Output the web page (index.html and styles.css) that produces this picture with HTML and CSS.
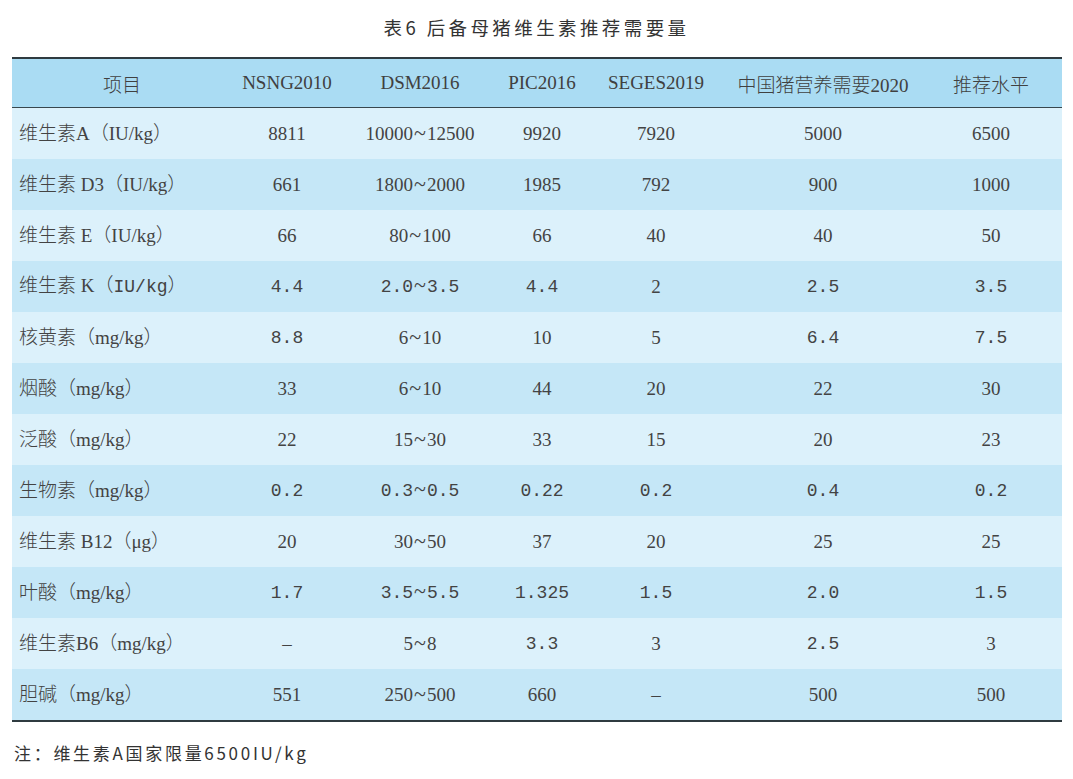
FILE: index.html
```
<!DOCTYPE html>
<html lang="zh">
<head>
<meta charset="utf-8">
<link rel="stylesheet" href="styles.css">
</head>
<body>
<div class="page">
  <h1 class="title">表6 后备母猪维生素推荐需要量</h1>
  <table class="vt">
    <colgroup>
      <col class="c1"><col class="c2"><col class="c3"><col class="c4"><col class="c5"><col class="c6"><col class="c7">
    </colgroup>
    <thead>
      <tr><th>项目</th><th>NSNG2010</th><th>DSM2016</th><th>PIC2016</th><th>SEGES2019</th><th>中国猪营养需要2020</th><th>推荐水平</th></tr>
    </thead>
    <tbody>
      <tr><td>维生素A（IU/kg）</td><td>8811</td><td>10000<span class="t">~</span>12500</td><td>9920</td><td>7920</td><td>5000</td><td>6500</td></tr>
      <tr><td>维生素 D3（IU/kg）</td><td>661</td><td>1800<span class="t">~</span>2000</td><td>1985</td><td>792</td><td>900</td><td>1000</td></tr>
      <tr><td>维生素 E（IU/kg）</td><td>66</td><td>80<span class="t">~</span>100</td><td>66</td><td>40</td><td>40</td><td>50</td></tr>
      <tr><td>维生素 K（<span class="m">IU/kg</span>）</td><td class="m">4.4</td><td class="m">2.0<span class="t">~</span>3.5</td><td class="m">4.4</td><td>2</td><td class="m">2.5</td><td class="m">3.5</td></tr>
      <tr><td>核黄素（mg/kg）</td><td class="m">8.8</td><td>6<span class="t">~</span>10</td><td>10</td><td>5</td><td class="m">6.4</td><td class="m">7.5</td></tr>
      <tr><td>烟酸（mg/kg）</td><td>33</td><td>6<span class="t">~</span>10</td><td>44</td><td>20</td><td>22</td><td>30</td></tr>
      <tr><td>泛酸（mg/kg）</td><td>22</td><td>15<span class="t">~</span>30</td><td>33</td><td>15</td><td>20</td><td>23</td></tr>
      <tr><td>生物素（mg/kg）</td><td class="m">0.2</td><td class="m">0.3<span class="t">~</span>0.5</td><td class="m">0.22</td><td class="m">0.2</td><td class="m">0.4</td><td class="m">0.2</td></tr>
      <tr><td>维生素 B12（μg）</td><td>20</td><td>30<span class="t">~</span>50</td><td>37</td><td>20</td><td>25</td><td>25</td></tr>
      <tr><td>叶酸（mg/kg）</td><td class="m">1.7</td><td class="m">3.5<span class="t">~</span>5.5</td><td class="m">1.325</td><td class="m">1.5</td><td class="m">2.0</td><td class="m">1.5</td></tr>
      <tr><td>维生素B6（mg/kg）</td><td>–</td><td>5<span class="t">~</span>8</td><td class="m">3.3</td><td>3</td><td class="m">2.5</td><td>3</td></tr>
      <tr><td>胆碱（mg/kg）</td><td>551</td><td>250<span class="t">~</span>500</td><td>660</td><td>–</td><td>500</td><td>500</td></tr>
    </tbody>
  </table>
  <p class="note">注：维生素A国家限量6500IU/kg</p>
</div>
</body>
</html>
```
FILE: styles.css
```
html, body {
  margin: 0;
  padding: 0;
  background: #ffffff;
}
.page {
  width: 1073px;
  height: 779px;
  overflow: hidden;
  font-family: "Liberation Serif", "Noto Sans CJK SC", serif;
  color: #434343;
}
.title {
  margin: 0;
  padding-top: 13px;
  height: 57px;
  box-sizing: border-box;
  text-align: center;
  font-family: "Noto Sans CJK SC", sans-serif;
  font-weight: 400;
  font-size: 18.5px;
  line-height: 28px;
  letter-spacing: 3.4px;
  color: #333333;
}
.vt {
  margin-left: 12px;
  width: 1050px;
  border-collapse: collapse;
  table-layout: fixed;
  border-top: 2px solid #2f3b40;
  border-bottom: 2px solid #2f3b40;
  font-size: 19px;
}
.c1 { width: 220px; }
.c2 { width: 110px; }
.c3 { width: 156px; }
.c4 { width: 88px; }
.c5 { width: 140px; }
.c6 { width: 194px; }
.c7 { width: 142px; }
.vt th {
  height: 48px;
  padding: 0;
  font-weight: 300;
  background: #aadcf3;
  border-bottom: 1.5px solid #38474d;
  text-align: center;
  color: #404040;
}
.vt td {
  height: 51px;
  padding: 0;
  font-weight: 300;
  line-height: 24px;
  text-align: center;
  white-space: nowrap;
}
.vt td:first-child {
  text-align: left;
  padding-left: 7px;
}
.vt tbody tr:nth-child(odd) { background: #dcf1fb; }
.vt tbody tr:nth-child(even) { background: #c5e7f7; }
.m {
  font-family: "Liberation Mono", "Noto Sans CJK SC", monospace;
  font-size: 18px;
  line-height: 24px;
}
.t {
  font-family: "Liberation Serif", serif;
  font-size: 22px;
  line-height: 0;
  padding: 0 1px;
}
.note {
  margin: 0;
  padding-top: 18px;
  padding-left: 14px;
  font-family: "Noto Sans CJK SC", sans-serif;
  font-size: 17px;
  letter-spacing: 2.7px;
  color: #333333;
}
```
